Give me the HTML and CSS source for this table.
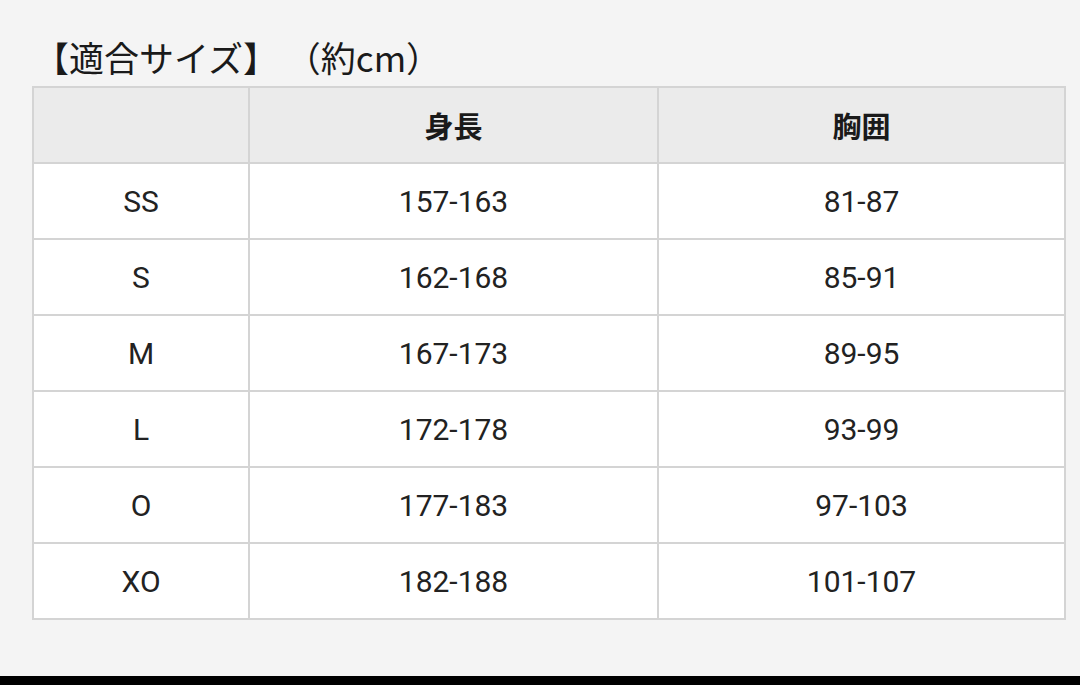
FILE: index.html
```html
<!DOCTYPE html>
<html lang="ja">
<head>
<meta charset="utf-8">
<link rel="stylesheet" href="styles.css">
</head>
<body>
<div class="page">
  <h2 class="title">【適合サイズ】 （約cm）</h2>
  <table class="size">
    <colgroup><col class="c1"><col class="c2"><col class="c3"></colgroup>
    <thead>
      <tr><th></th><th>身長</th><th>胸囲</th></tr>
    </thead>
    <tbody>
      <tr><td>SS</td><td>157-163</td><td>81-87</td></tr>
      <tr><td>S</td><td>162-168</td><td>85-91</td></tr>
      <tr><td>M</td><td>167-173</td><td>89-95</td></tr>
      <tr><td>L</td><td>172-178</td><td>93-99</td></tr>
      <tr><td>O</td><td>177-183</td><td>97-103</td></tr>
      <tr><td>XO</td><td>182-188</td><td>101-107</td></tr>
    </tbody>
  </table>
</div>
<div class="bar"></div>
</body>
</html>
```
FILE: styles.css
```css
html, body {
  margin: 0;
  padding: 0;
}
body {
  width: 1080px;
  height: 685px;
  background: #f4f4f4;
  overflow: hidden;
  display: flex;
  flex-direction: column;
  font-family: Roboto, "Noto Sans CJK JP", sans-serif;
  color: #222222;
}
.page {
  flex: 1;
  padding: 38px 0 0 32px;
}
.title {
  margin: 0 0 10px 0;
  padding-left: 2px;
  font-family: "Noto Sans CJK JP", sans-serif;
  font-weight: 400;
  font-size: 35px;
  line-height: 38px;
  color: #1a1a1a;
}
.size {
  border-collapse: collapse;
  width: 1032px;
  table-layout: fixed;
  background: #ffffff;
}
.c1 { width: 216px; }
.c2 { width: 409px; }
.c3 { width: 407px; }
.size th, .size td {
  border: 2px solid #d4d4d4;
  text-align: center;
  vertical-align: middle;
  height: 74px;
  padding: 0;
}
.size th {
  background: #ebebeb;
  font-family: "Noto Sans CJK JP", sans-serif;
  font-weight: 700;
  font-size: 29px;
  color: #1a1a1a;
}
.size td {
  font-size: 30px;
  font-weight: 400;
}
.bar {
  height: 9px;
  background: #000000;
}
```
